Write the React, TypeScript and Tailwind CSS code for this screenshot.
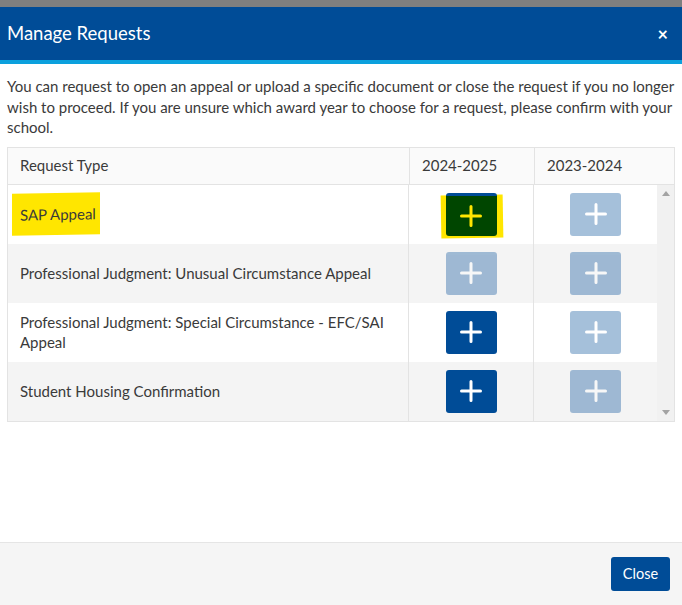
import React from "react";

type Row = { label: string; cur: "on" | "off" | "hl"; prev: "on" | "off" };

const rows: Row[] = [
  { label: "SAP Appeal", cur: "hl", prev: "off" },
  { label: "Professional Judgment: Unusual Circumstance Appeal", cur: "off", prev: "off" },
  { label: "Professional Judgment: Special Circumstance - EFC/SAI Appeal", cur: "on", prev: "off" },
  { label: "Student Housing Confirmation", cur: "on", prev: "off" },
];

function Plus({ color }: { color: string }) {
  return (
    <svg width="22" height="22" viewBox="0 0 22 22">
      <path d="M11 1.5v19M1.5 11h19" stroke={color} strokeWidth="3" strokeLinecap="round" />
    </svg>
  );
}

function AddButton({ state }: { state: "on" | "off" | "hl" }) {
  if (state === "hl") {
    return (
      <div className="relative w-[51px] h-[43px]">
        <span className="absolute -left-[5px] -right-[6px] top-[2px] -bottom-[2px] bg-[#ffe600] -rotate-1" />
        <button className="relative w-[51px] h-[43px] rounded-[3px] bg-[#004600] border-t-[3px] border-[#004c97] flex items-center justify-center">
          <Plus color="#ffe600" />
        </button>
      </div>
    );
  }
  return (
    <button
      className={`w-[51px] h-[43px] rounded-[3px] bg-[#004c97] flex items-center justify-center ${
        state === "off" ? "opacity-35" : ""
      }`}
    >
      <Plus color="#ffffff" />
    </button>
  );
}

export default function App() {
  return (
    <div className="w-[682px] h-[605px] bg-white flex flex-col text-[#3a3a3a]" style={{ fontFamily: "Lato, 'Open Sans', sans-serif" }}>
      <div className="h-[7px] bg-[#7f7f7f]" />
      <div className="h-[53px] bg-[#004c97] flex items-center justify-between pl-[7px] pr-[14px]">
        <h1 className="text-[18.5px] text-white leading-none">Manage Requests</h1>
        <span className="text-white font-bold text-[18px] leading-none">×</span>
      </div>
      <div className="h-[4px] bg-[#0ba0dd]" />

      <div className="flex-1 px-[7px] pt-[12px]">
        <p className="text-[15px] leading-[20.5px]">
          You can request to open an appeal or upload a specific document or close the request if you no longer
          wish to proceed. If you are unsure which award year to choose for a request, please confirm with your
          school.
        </p>

        <div className="mt-[9px] border border-[#e3e3e3] text-[15px]">
          <div className="flex h-[37px] bg-[#fafafa] border-b border-[#e3e3e3]">
            <div className="w-[401px] pl-[12px] flex items-center">Request Type</div>
            <div className="w-[125px] border-l border-[#e3e3e3] pl-[12px] flex items-center">2024-2025</div>
            <div className="flex-1 border-l border-[#e3e3e3] pl-[12px] flex items-center">2023-2024</div>
          </div>
          <div className="flex">
            <div className="flex-1">
              {rows.map((r, i) => (
                <div key={r.label} className={`flex h-[59px] ${i % 2 === 1 ? "bg-[#f4f4f4]" : "bg-white"}`}>
                  <div className="w-[400px] pl-[12px] pr-[10px] flex items-center leading-[20px]">
                    {r.cur === "hl" ? (
                      <span className="bg-[#ffe600] -ml-[8px] pl-[8px] pr-[4px] py-[11px] -skew-y-1">{r.label}</span>
                    ) : (
                      r.label
                    )}
                  </div>
                  <div className="w-[125px] border-l border-[#e3e3e3] flex items-center justify-center">
                    <AddButton state={r.cur} />
                  </div>
                  <div className="flex-1 border-l border-[#e3e3e3] flex items-center justify-center">
                    <AddButton state={r.prev} />
                  </div>
                </div>
              ))}
            </div>
            <div className="w-[17px] bg-[#f1f1f1] flex flex-col items-center justify-between py-[6px]">
              <svg width="8" height="5" viewBox="0 0 8 5"><path d="M0 5L4 0L8 5Z" fill="#a3a3a3" /></svg>
              <svg width="8" height="5" viewBox="0 0 8 5"><path d="M0 0L4 5L8 0Z" fill="#a3a3a3" /></svg>
            </div>
          </div>
        </div>
      </div>

      <div className="h-[63px] bg-[#f5f5f5] border-t border-[#e5e5e5] flex items-center justify-end pr-[12px]">
        <button className="w-[59px] h-[34px] rounded-[3px] bg-[#004c97] text-white text-[14.5px]">Close</button>
      </div>
    </div>
  );
}
